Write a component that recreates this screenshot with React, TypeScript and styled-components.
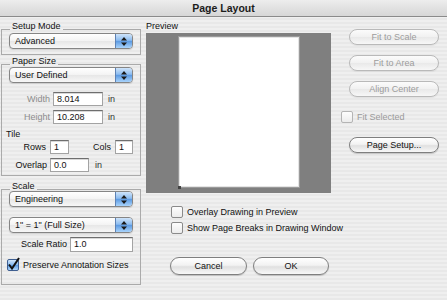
import styled, { createGlobalStyle } from "styled-components";

const GlobalStyle = createGlobalStyle`
  html, body {
    margin: 0;
    padding: 0;
    background: #ececec;
  }
`;

const stripes =
  "repeating-linear-gradient(to bottom, #efefef 0px, #efefef 2px, #e8e8e8 2px, #e8e8e8 4px)";

const Window = styled.div`
  width: 447px;
  height: 300px;
  overflow: hidden;
  background: ${stripes};
  font-family: "Liberation Sans", Arial, sans-serif;
  font-size: 9px;
  color: #111;
`;

const TitleBar = styled.div`
  height: 16px;
  line-height: 16px;
  border-bottom: 1px solid #8a8a8a;
  background: linear-gradient(#ededed, #d6d6d6);
  text-align: center;
  font-weight: bold;
  font-size: 10.5px;
  color: #1c1c1c;
`;

const Body = styled.div`
  display: flex;
  padding: 3px 0 0 1px;
`;

const LeftColumn = styled.div`
  width: 140px;
  display: flex;
  flex-direction: column;
`;

const MiddleColumn = styled.div`
  width: 185px;
  margin-left: 5px;
  display: flex;
  flex-direction: column;
`;

const RightColumn = styled.div`
  width: 98px;
  margin-left: 10px;
  padding-top: 9px;
  display: flex;
  flex-direction: column;
`;

/* group box */
const Group = styled.div<{ $gap?: number }>`
  margin-top: ${(p) => p.$gap ?? 0}px;
`;

const GroupHead = styled.div`
  display: flex;
  align-items: flex-end;
  height: 10px;
  &::before,
  &::after {
    content: "";
    height: 1px;
    background: #aaaaaa;
  }
  &::before {
    width: 9px;
  }
  &::after {
    flex: 1;
  }
`;

const GroupTitle = styled.span`
  line-height: 12px;
  margin-bottom: -2px;
  padding: 0 2px;
`;

const GroupBox = styled.div<{ $pt: number; $pb: number }>`
  border: 1px solid #aaaaaa;
  border-top: none;
  padding: ${(p) => p.$pt}px 7px ${(p) => p.$pb}px 7px;
  display: flex;
  flex-direction: column;
`;

/* popup menu */
const Popup = styled.div<{ $gap?: number }>`
  margin-top: ${(p) => p.$gap ?? 0}px;
  height: 14px;
  display: flex;
  align-items: stretch;
  border: 1px solid #858585;
  border-radius: 4px;
  overflow: hidden;
  background: linear-gradient(#ffffff, #f3f3f3 50%, #e7e7e7 52%, #f7f7f7);
  box-shadow: 0 1px 1px rgba(0, 0, 0, 0.12);
`;

const PopupText = styled.span`
  flex: 1;
  padding-left: 5px;
  line-height: 14px;
`;

const PopupArrows = styled.span`
  width: 16px;
  border-left: 1px solid #5d82b5;
  background: linear-gradient(#cfe4fa, #8cbcf0 45%, #5c9ae2 52%, #a9d3fb);
  display: flex;
  align-items: center;
  justify-content: center;
`;

const Arrows = () => (
  <svg width="6" height="9" viewBox="0 0 6 9">
    <path d="M0 3.5 L3 0 L6 3.5 Z M0 5.5 L3 9 L6 5.5 Z" fill="#1a1a1a" />
  </svg>
);

const PopupMenu = ({ label, gap }: { label: string; gap?: number }) => (
  <Popup $gap={gap}>
    <PopupText>{label}</PopupText>
    <PopupArrows>
      <Arrows />
    </PopupArrows>
  </Popup>
);

/* field rows */
const Row = styled.div<{ $gap?: number; $ml?: number }>`
  display: flex;
  align-items: center;
  height: 14px;
  margin-top: ${(p) => p.$gap ?? 0}px;
  margin-left: ${(p) => p.$ml ?? 0}px;
`;

const FieldLabel = styled.span<{ $w: number; $dim?: boolean }>`
  width: ${(p) => p.$w}px;
  text-align: right;
  color: ${(p) => (p.$dim ? "#8c8c8c" : "#111")};
  flex-shrink: 0;
`;

const TextBox = styled.span<{ $w: number; $ml: number; $h?: number }>`
  box-sizing: border-box;
  width: ${(p) => p.$w}px;
  height: ${(p) => p.$h ?? 14}px;
  margin-left: ${(p) => p.$ml}px;
  padding-left: 3px;
  line-height: ${(p) => (p.$h ?? 14) - 2}px;
  background: #fff;
  border: 1px solid #a3a3a3;
  border-top-color: #6e6e6e;
  box-shadow: inset 0 1px 0 #d8d8d8;
  flex-shrink: 0;
`;

const Unit = styled.span<{ $ml: number }>`
  margin-left: ${(p) => p.$ml}px;
  color: #333;
`;

const SubHead = styled.div`
  line-height: 10px;
  margin: 5px 0 0 -3px;
`;

/* check boxes */
const Check = styled.span<{ $on?: boolean; $off?: boolean }>`
  box-sizing: border-box;
  width: 12px;
  height: 12px;
  flex-shrink: 0;
  border: 1px solid ${(p) => (p.$on ? "#3f5f91" : p.$off ? "#b4b4b4" : "#8a8a8a")};
  border-radius: 2px;
  background: ${(p) =>
    p.$on
      ? "linear-gradient(#d2e6fb, #8dbdf0 45%, #5e9ce3 55%, #b2d8fc)"
      : "linear-gradient(#fdfdfd, #ececec)"};
  display: flex;
  align-items: center;
  justify-content: center;
  overflow: visible;
`;

const CheckText = styled.span<{ $off?: boolean }>`
  margin-left: 4px;
  color: ${(p) => (p.$off ? "#9a9a9a" : "#111")};
  white-space: nowrap;
`;

const Tick = () => (
  <svg width="12" height="12" viewBox="0 0 12 12" style={{ overflow: "visible" }}>
    <path d="M2 5.5 L5 9.5 L12 -1" fill="none" stroke="#111" strokeWidth="2" />
  </svg>
);

/* preview */
const PreviewLabel = styled.div`
  line-height: 12px;
  margin-bottom: 1px;
`;

const PreviewArea = styled.div`
  height: 160px;
  background: #7f7f7f;
  display: flex;
  justify-content: center;
  padding-top: 3px;
  box-sizing: border-box;
`;

const Sheet = styled.div`
  position: relative;
  box-sizing: border-box;
  width: 122px;
  height: 152px;
  background: #fff;
  border: 1px solid #9a9a9a;
  box-shadow: inset 0 0 0 1px #e4e4e4;
`;

const Anchor = styled.span`
  position: absolute;
  left: -1px;
  bottom: -2px;
  width: 3px;
  height: 3px;
  background: #444;
`;

const Options = styled.div`
  margin: 12px 0 0 25px;
  display: flex;
  flex-direction: column;
  gap: 2px;
`;

const ButtonRow = styled.div`
  display: flex;
  gap: 6px;
  margin: 22px 0 0 24px;
`;

/* buttons */
const Button = styled.div<{ $w: number; $h: number; $gap?: number; $ml?: number; $off?: boolean }>`
  box-sizing: border-box;
  width: ${(p) => p.$w}px;
  height: ${(p) => p.$h}px;
  margin-top: ${(p) => p.$gap ?? 0}px;
  margin-left: ${(p) => p.$ml ?? 0}px;
  line-height: ${(p) => p.$h - 2}px;
  text-align: center;
  border: 1px solid ${(p) => (p.$off ? "#b9b9b9" : "#7f7f7f")};
  border-radius: ${(p) => p.$h / 2}px;
  color: ${(p) => (p.$off ? "#9c9c9c" : "#111")};
  background: ${(p) =>
    p.$off
      ? "linear-gradient(#fbfbfb, #f1f1f1 50%, #e9e9e9 52%, #f7f7f7)"
      : "linear-gradient(#ffffff, #f2f2f2 45%, #e0e0e0 55%, #f8f8f8)"};
  box-shadow: 0 1px 1px rgba(0, 0, 0, ${(p) => (p.$off ? 0.06 : 0.18)});
`;

export default function App() {
  return (
    <Window>
      <GlobalStyle />
      <TitleBar>Page Layout</TitleBar>
      <Body>
        <LeftColumn>
          <Group>
            <GroupHead>
              <GroupTitle>Setup Mode</GroupTitle>
            </GroupHead>
            <GroupBox $pt={3} $pb={5}>
              <PopupMenu label="Advanced" />
            </GroupBox>
          </Group>

          <Group>
            <GroupHead>
              <GroupTitle>Paper Size</GroupTitle>
            </GroupHead>
            <GroupBox $pt={2} $pb={3}>
              <PopupMenu label="User Defined" />
              <Row $gap={9}>
                <FieldLabel $w={41} $dim>Width</FieldLabel>
                <TextBox $w={50} $ml={3}>8.014</TextBox>
                <Unit $ml={5}>in</Unit>
              </Row>
              <Row $gap={4}>
                <FieldLabel $w={41} $dim>Height</FieldLabel>
                <TextBox $w={50} $ml={3}>10.208</TextBox>
                <Unit $ml={5}>in</Unit>
              </Row>
              <SubHead>Tile</SubHead>
              <Row $gap={1}>
                <FieldLabel $w={37}>Rows</FieldLabel>
                <TextBox $w={19} $ml={4}>1</TextBox>
                <FieldLabel $w={42}>Cols</FieldLabel>
                <TextBox $w={18} $ml={4}>1</TextBox>
              </Row>
              <Row $gap={4}>
                <FieldLabel $w={38}>Overlap</FieldLabel>
                <TextBox $w={39} $ml={3}>0.0</TextBox>
                <Unit $ml={6}>in</Unit>
              </Row>
            </GroupBox>
          </Group>

          <Group $gap={4}>
            <GroupHead>
              <GroupTitle>Scale</GroupTitle>
            </GroupHead>
            <GroupBox $pt={1} $pb={12}>
              <PopupMenu label="Engineering" />
              <PopupMenu label={'1" = 1" (Full Size)'} gap={10} />
              <Row $gap={4}>
                <FieldLabel $w={58}>Scale Ratio</FieldLabel>
                <TextBox $w={63} $ml={3} $h={15}>1.0</TextBox>
              </Row>
              <Row $gap={7} $ml={-2}>
                <Check $on>
                  <Tick />
                </Check>
                <CheckText>Preserve Annotation Sizes</CheckText>
              </Row>
            </GroupBox>
          </Group>
        </LeftColumn>

        <MiddleColumn>
          <PreviewLabel>Preview</PreviewLabel>
          <PreviewArea>
            <Sheet>
              <Anchor />
            </Sheet>
          </PreviewArea>
          <Options>
            <Row>
              <Check />
              <CheckText>Overlay Drawing in Preview</CheckText>
            </Row>
            <Row>
              <Check />
              <CheckText>Show Page Breaks in Drawing Window</CheckText>
            </Row>
          </Options>
          <ButtonRow>
            <Button $w={77} $h={18}>Cancel</Button>
            <Button $w={76} $h={18}>OK</Button>
          </ButtonRow>
        </MiddleColumn>

        <RightColumn>
          <Button $w={90} $h={16} $ml={8} $off>Fit to Scale</Button>
          <Button $w={90} $h={16} $ml={8} $gap={10} $off>Fit to Area</Button>
          <Button $w={90} $h={16} $ml={8} $gap={10} $off>Align Center</Button>
          <Row $gap={13}>
            <Check $off />
            <CheckText $off>Fit Selected</CheckText>
          </Row>
          <Button $w={90} $h={16} $ml={8} $gap={13}>Page Setup...</Button>
        </RightColumn>
      </Body>
    </Window>
  );
}
